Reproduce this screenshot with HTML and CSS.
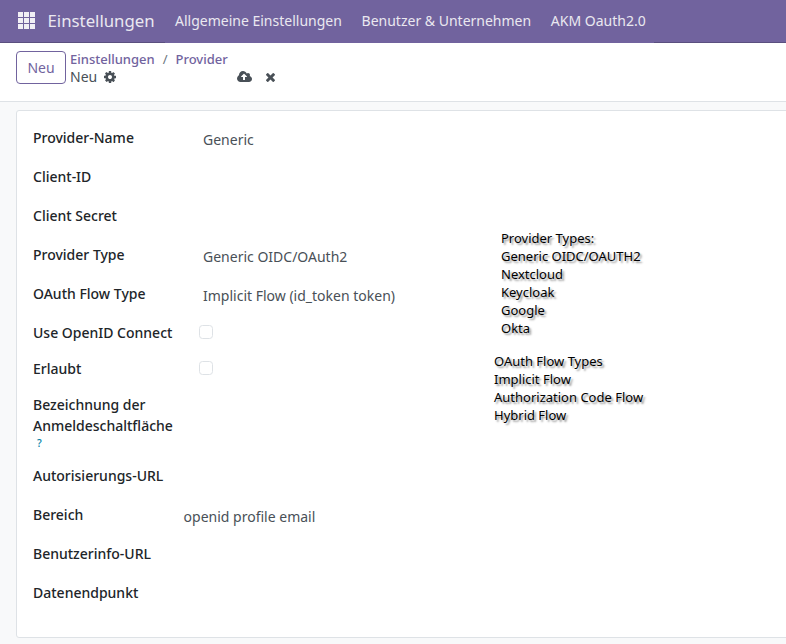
FILE: index.html
```html
<!DOCTYPE html>
<html lang="de">
<head>
<meta charset="utf-8">
<title>Einstellungen</title>
<link rel="stylesheet" href="styles.css">
</head>
<body>
<header class="navbar">
  <svg class="apps" viewBox="0 0 17 17"><path d="M0 0h5v5H0zM6 0h5v5H6zM12 0h5v5h-5zM0 6h5v5H0zM6 6h5v5H6zM12 6h5v5h-5zM0 12h5v5H0zM6 12h5v5H6zM12 12h5v5h-5z"/></svg>
  <span class="brand">Einstellungen</span>
  <nav class="menu">
    <a>Allgemeine Einstellungen</a>
    <a>Benutzer &amp; Unternehmen</a>
    <a>AKM Oauth2.0</a>
  </nav>
</header>
<section class="control">
  <button class="new">Neu</button>
  <div class="crumbs">
    <div class="path"><a>Einstellungen</a><span class="slash">/</span><a>Provider</a></div>
    <div class="current">
      <span class="title">Neu</span>
      <svg class="cog" viewBox="128 128 1536 1536"><path d="M1152 896q0-106-75-181t-181-75-181 75-75 181 75 181 181 75 181-75 75-181zm512-109v222q0 12-8 23t-20 13l-185 28q-19 54-39 91 35 50 107 138 10 12 10 25t-9 23q-27 37-99 108t-94 71q-12 0-26-9l-138-108q-44 23-91 38-16 136-29 186-7 28-36 28h-222q-14 0-24.5-8.5t-11.5-21.5l-28-184q-49-16-90-37l-141 107q-10 9-25 9-14 0-25-11-126-114-165-168-7-10-7-23 0-12 8-23 15-21 51-66.5t54-70.5q-27-50-41-99l-183-27q-13-2-21-12.5t-8-23.5v-222q0-12 8-23t19-13l186-28q14-46 39-92-40-57-107-138-10-12-10-24 0-10 9-23 26-36 98.5-107.5t94.5-71.5q13 0 26 10l138 107q44-23 91-38 16-136 29-186 7-28 36-28h222q14 0 24.5 8.5t11.5 21.5l28 184q49 16 90 37l142-107q9-9 24-9 13 0 25 10 129 119 165 170 7 8 7 22 0 12-8 23-15 21-51 66.5t-54 70.5q26 50 41 98l183 28q13 2 21 12.5t8 23.5z"/></svg>
      <svg class="cloud" viewBox="0 128 1920 1408"><path d="M1280 864q0-14-9-23l-352-352q-9-9-23-9t-23 9l-351 351q-10 12-10 24 0 14 9 23t23 9h224v352q0 13 9.5 22.5t22.5 9.5h192q13 0 22.5-9.5t9.5-22.5v-352h224q13 0 22.5-9.5t9.5-22.5zm640 288q0 159-112.5 271.5t-271.5 112.5h-1088q-185 0-316.5-131.5t-131.5-316.5q0-130 70-240t188-165q-2-30-2-43 0-212 150-362t362-150q156 0 285.5 87t188.5 231q71-62 166-62 106 0 181 75t75 181q0 76-41 138 130 31 213.5 135.5t83.5 238.5z"/></svg>
      <svg class="times" viewBox="302 366 1188 1188"><path d="M1490 1322q0 40-28 68l-136 136q-28 28-68 28t-68-28l-294-294-294 294q-28 28-68 28t-68-28l-136-136q-28-28-28-68t28-68l294-294-294-294q-28-28-28-68t28-68l136-136q28-28 68-28t68 28l294 294 294-294q28-28 68-28t68 28l136 136q28 28 28 68t-28 68l-294 294 294 294q28 28 28 68z"/></svg>
    </div>
  </div>
</section>
<main class="sheet">
  <div class="form">
    <div class="row"><label>Provider-Name</label><span class="value">Generic</span></div>
    <div class="row"><label>Client-ID</label></div>
    <div class="row"><label>Client Secret</label></div>
    <div class="row"><label>Provider Type</label><span class="value">Generic OIDC/OAuth2</span></div>
    <div class="row"><label>OAuth Flow Type</label><span class="value">Implicit Flow (id_token token)</span></div>
    <div class="row check"><label>Use OpenID Connect</label><span class="box"></span></div>
    <div class="row check"><label>Erlaubt</label><span class="box"></span></div>
    <div class="row tall"><label>Bezeichnung der Anmeldeschaltfläche <sup>?</sup></label></div>
    <div class="row"><label>Autorisierungs-URL</label></div>
    <div class="row"><label>Bereich</label><span class="value scope">openid profile email</span></div>
    <div class="row"><label>Benutzerinfo-URL</label></div>
    <div class="row"><label>Datenendpunkt</label></div>
  </div>
  <aside class="notes">
    <ul class="types">
      <li>Provider Types:</li><li>Generic OIDC/OAUTH2</li><li>Nextcloud</li><li>Keycloak</li><li>Google</li><li>Okta</li>
    </ul>
    <ul class="flows">
      <li>OAuth Flow Types</li><li>Implicit Flow</li><li>Authorization Code Flow</li><li>Hybrid Flow</li>
    </ul>
  </aside>
</main>
</body>
</html>
```
FILE: styles.css
```css
* { box-sizing: border-box; }
body {
  margin: 0;
  height: 644px;
  overflow: hidden;
  background: #f8f9fa;
  color: #495057;
  font: 14px/21px "Noto Sans", sans-serif;
}
svg { display: block; flex: none; fill: #495057; }
.navbar {
  display: flex;
  height: 43px;
  padding-left: 18px;
  background: #71639e;
  border-bottom: 1px solid #5a4f7f;
  color: #eae8f0;
  white-space: nowrap;
}
.apps { width: 17px; height: 17px; margin-top: 12px; fill: #f1eff5; }
.brand { width: 117.5px; margin-left: 12.5px; font-size: 16.8px; line-height: 42px; }
.menu {
  display: flex;
  gap: 19.7px;
  height: 43px;
  padding: 0 8px 0 10px;
  background: #71639e;
  line-height: 41px;
}
.control {
  display: flex;
  height: 59px;
  padding: 8px 16px 0;
  background: #fff;
  border-bottom: 1px solid #dee2e6;
}
.new {
  width: 50px;
  height: 33px;
  padding: 0;
  border: 1px solid #71639e;
  border-radius: 4px;
  background: #fff;
  color: #71639e;
  font: 450 14px/21px "Noto Sans", sans-serif;
}
.crumbs { margin-left: 4px; }
.path { height: 17px; color: #71639e; font-size: 13px; font-weight: 500; line-height: 17px; }
.slash { margin: 0 8px; color: #6c757d; font-weight: 400; }
.current { display: flex; align-items: center; height: 18px; }
.title { padding-bottom: 2px; }
.cog { width: 12px; height: 12px; margin-left: 7px; }
.cloud { width: 15px; height: 11px; margin: 0 0 1px 121px; }
.times { width: 9px; height: 9px; margin-left: 14px; }
.sheet {
  display: flex;
  width: 786px;
  height: 528px;
  margin: 8px 0 0 16px;
  padding: 16px 16px 0;
  background: #fff;
  border: 1px solid #dee2e6;
  border-radius: 3px;
}
.form { width: 461px; }
.row { display: flex; height: 39px; }
.row label { flex: none; width: 150px; color: #212529; font-weight: 500; }
.value { margin: 2px 0 0 20px; }
.value.scope { margin-left: .6px; }
.check { height: 36px; }
.tall { height: 71px; }
.box { width: 14px; height: 14px; margin: 3px 0 0 16px; border: 1px solid #dee2e6; border-radius: 3.5px; }
sup { display: block; padding: 1px 0 0 4px; color: #0180a5; font-size: 10.5px; line-height: 12px; }
.notes { padding-top: 102px; color: #000; font-size: 13px; line-height: 18px; text-shadow: 2px 2px 2px rgba(0, 0, 0, .42); }
.notes ul { margin: 0; padding: 0; list-style: none; }
.notes .types { padding-left: 7px; }
.notes .flows { margin-top: 15px; }
```
